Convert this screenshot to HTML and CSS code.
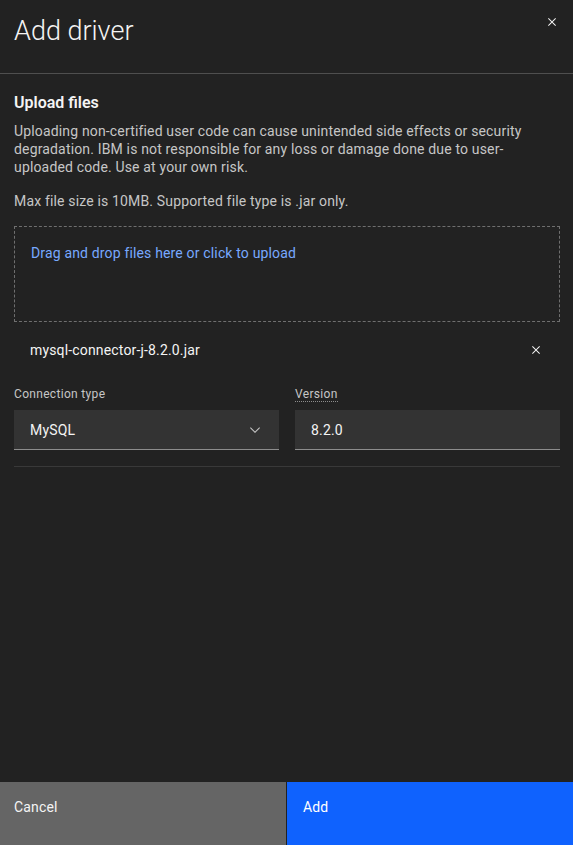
FILE: index.html
```html
<!DOCTYPE html>
<html lang="en">
<head>
<meta charset="utf-8">
<title>Add driver</title>
<link rel="stylesheet" href="styles.css">
</head>
<body>
<div class="modal">
  <header class="modal-header">
    <h1 class="modal-title">Add driver</h1>
    <button class="close-btn" aria-label="Close">
      <svg width="16" height="16" viewBox="0 0 16 16"><path d="M12 4.7L11.3 4 8 7.3 4.7 4 4 4.7 7.3 8 4 11.3 4.7 12 8 8.7 11.3 12 12 11.3 8.7 8z" fill="#f4f4f4"/></svg>
    </button>
  </header>
  <main class="modal-body">
    <h2 class="section-title">Upload files</h2>
    <p class="helper">Uploading non-certified user code can cause unintended side effects or security degradation. IBM is not responsible for any loss or damage done due to user-uploaded code. Use at your own risk.</p>
    <p class="helper helper-gap">Max file size is 10MB. Supported file type is .jar only.</p>
    <div class="dropzone"><span class="dropzone-link">Drag and drop files here or click to upload</span></div>
    <div class="file-item">
      <span class="file-name">mysql-connector-j-8.2.0.jar</span>
      <svg width="16" height="16" viewBox="0 0 16 16"><path d="M12 4.7L11.3 4 8 7.3 4.7 4 4 4.7 7.3 8 4 11.3 4.7 12 8 8.7 11.3 12 12 11.3 8.7 8z" fill="#f4f4f4"/></svg>
    </div>
    <div class="fields">
      <div class="field">
        <label class="label">Connection type</label>
        <div class="control">
          <span>MySQL</span>
          <svg width="16" height="16" viewBox="0 0 16 16"><path d="M8 11L3 6l.7-.7L8 9.6l4.3-4.3.7.7z" fill="#c6c6c6"/></svg>
        </div>
      </div>
      <div class="field">
        <label class="label"><span class="dotted">Version</span></label>
        <div class="control"><span>8.2.0</span></div>
      </div>
    </div>
    <hr class="divider">
  </main>
  <footer class="modal-footer">
    <button class="btn btn-secondary">Cancel</button>
    <button class="btn btn-primary">Add</button>
  </footer>
</div>
</body>
</html>
```
FILE: styles.css
```css
* { box-sizing: border-box; }
html, body { margin: 0; padding: 0; }
body {
  background: #222222;
  font-family: Roboto, "Noto Sans", sans-serif;
  color: #f4f4f4;
  width: 573px;
  height: 845px;
  overflow: hidden;
}
.modal {
  display: flex;
  flex-direction: column;
  height: 845px;
}
.modal-header {
  display: flex;
  justify-content: space-between;
  align-items: flex-start;
  height: 74px;
  border-bottom: 1px solid #4f4f4f;
  padding: 14px 5px 0 14px;
}
.modal-title {
  margin: 0;
  font-size: 27px;
  line-height: 34px;
  font-weight: 300;
  color: #f4f4f4;
}
.close-btn {
  background: none;
  border: 0;
  padding: 0;
  width: 32px;
  height: 32px;
  margin-top: -8px;
  display: flex;
  align-items: center;
  justify-content: center;
}
.modal-body {
  flex: 1;
  padding: 18px 13px 0 14px;
}
.section-title {
  margin: 0;
  font-size: 16px;
  line-height: 22px;
  font-weight: 600;
  color: #f4f4f4;
}
.helper {
  margin: 8px 0 0;
  font-size: 14px;
  line-height: 18px;
  color: #c6c6c6;
  letter-spacing: 0.16px;
}
.helper-gap { margin-top: 16px; }
.dropzone {
  margin-top: 16px;
  height: 96px;
  border: 1px dashed #6f6f6f;
  padding: 16px;
}
.dropzone-link {
  font-size: 14px;
  line-height: 20px;
  color: #78a9ff;
  letter-spacing: 0.16px;
}
.file-item {
  margin-top: 4px;
  height: 48px;
  display: flex;
  align-items: center;
  justify-content: space-between;
  padding: 0 16px;
}
.file-name {
  font-size: 14px;
  color: #f4f4f4;
  letter-spacing: 0.16px;
}
.fields {
  margin-top: 12px;
  display: grid;
  grid-template-columns: 1fr 1fr;
  gap: 16px;
}
.label {
  display: block;
  font-size: 12px;
  line-height: 16px;
  color: #c6c6c6;
  letter-spacing: 0.32px;
  margin-bottom: 8px;
}
.dotted { border-bottom: 1px dotted #8d8d8d; }
.control {
  height: 40px;
  background: #333333;
  border-bottom: 1px solid #8d8d8d;
  display: flex;
  align-items: center;
  justify-content: space-between;
  padding: 0 16px;
  font-size: 14px;
  color: #f4f4f4;
  letter-spacing: 0.16px;
}
.divider {
  margin: 16px 0 0;
  border: 0;
  border-top: 1px solid #393939;
}
.modal-footer {
  display: flex;
  height: 63px;
  gap: 1px;
  background: #222222;
}
.btn {
  border: 0;
  font-family: inherit;
  font-size: 14px;
  line-height: 18px;
  letter-spacing: 0.16px;
  text-align: left;
  padding: 16px 16px 0;
  display: flex;
  align-items: flex-start;
  color: #ffffff;
}
.btn-secondary {
  width: 286px;
  background: #656565;
  padding-left: 14px;
  color: #f4f4f4;
}
.btn-primary {
  flex: 1;
  background: #0f62fe;
}
```
